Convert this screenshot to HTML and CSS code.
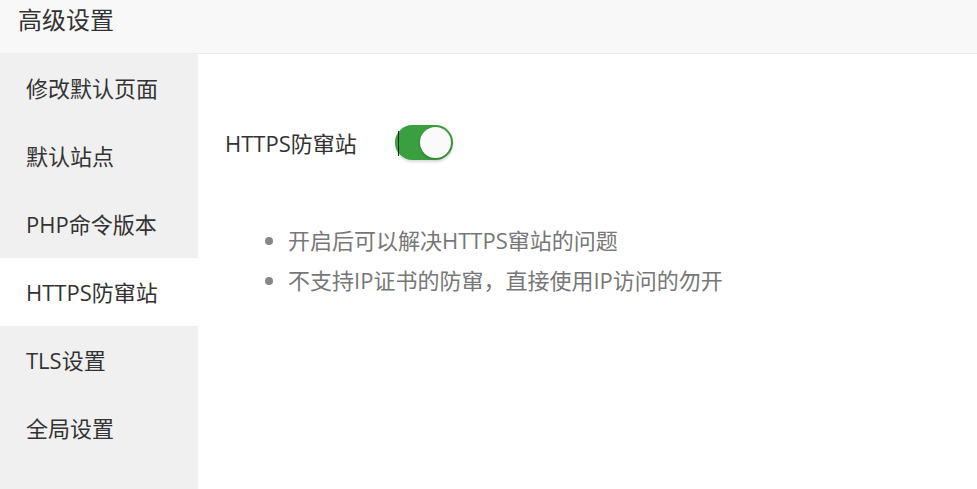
FILE: index.html
```html
<!DOCTYPE html>
<html lang="zh-CN">
<head>
    <meta charset="UTF-8">
    <title>高级设置</title>
    <link rel="stylesheet" href="styles.css">
</head>
<body>
    <div class="header">高级设置</div>
    <div class="main">
        <div class="sidebar">
            <div class="tab">修改默认页面</div>
            <div class="tab">默认站点</div>
            <div class="tab">PHP命令版本</div>
            <div class="tab active">HTTPS防窜站</div>
            <div class="tab">TLS设置</div>
            <div class="tab">全局设置</div>
        </div>
        <div class="content">
            <div class="row">
                <span class="label">HTTPS防窜站</span>
                <span class="switch on"><span class="caret"></span><span class="knob"></span></span>
            </div>
            <ul class="tips">
                <li>开启后可以解决HTTPS窜站的问题</li>
                <li>不支持IP证书的防窜，直接使用IP访问的勿开</li>
            </ul>
        </div>
    </div>
</body>
</html>
```

FILE: styles.css
```css
body {
    margin: 0;
    background: #fff;
    font-family: "Open Sans", "Noto Sans CJK SC", sans-serif;
    color: #333;
    overflow: hidden;
}
.header {
    height: 53px;
    line-height: 40px;
    padding-left: 18px;
    font-size: 24px;
    background: #f8f8f8;
    border-bottom: 1px solid #ececec;
    color: #333;
}
.main {
    display: flex;
    height: 435px;
}
.sidebar {
    width: 198px;
    background: #f0f0f0;
}
.tab {
    height: 68px;
    line-height: 68px;
    padding-left: 26px;
    font-size: 22px;
    color: #333;
}
.tab.active {
    background: #fff;
}
.content {
    flex: 1;
    padding: 70px 0 0 27px;
}
.row {
    display: flex;
    align-items: center;
    height: 36px;
}
.label {
    font-size: 22px;
    color: #333;
    width: 170px;
}
.switch {
    position: relative;
    width: 58px;
    height: 35px;
    border-radius: 18px;
    background: #3a9f3e;
    box-shadow: 0 2px 3px rgba(0,0,0,0.15);
}
.knob {
    position: absolute;
    right: 2px;
    top: 2px;
    width: 31px;
    height: 31px;
    border-radius: 50%;
    background: #fafafa;
    box-shadow: 0 1px 3px rgba(0,0,0,0.25);
}
.caret {
    position: absolute;
    left: 3px;
    top: 6px;
    width: 1px;
    height: 25px;
    background: #222;
}
.tips {
    margin: 60px 0 0 0;
    padding-left: 63px;
    font-size: 22px;
    color: #777;
    line-height: 40px;
}
.tips li::marker {
    color: #888;
}
```
